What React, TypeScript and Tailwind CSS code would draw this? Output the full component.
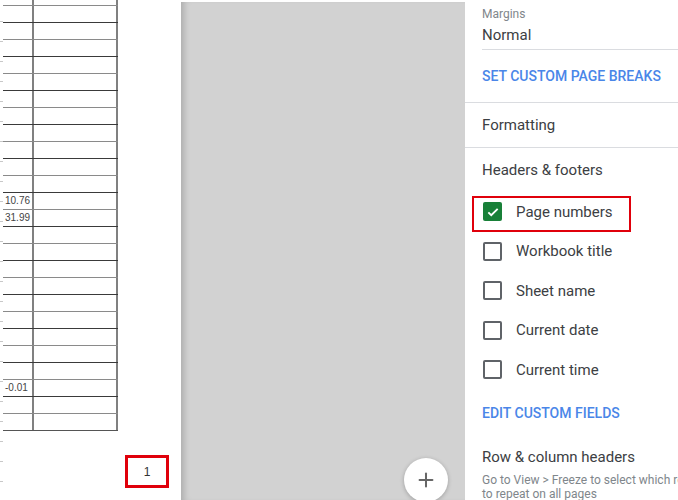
import { Plus } from "lucide-react";

const rows = Array.from({ length: 25 }, (_, i) => i);
const values: Record<number, string> = { 11: "10.76", 12: "31.99", 22: "-0.01" };

function Checkbox({ checked }: { checked?: boolean }) {
  if (checked) {
    return (
      <span className="flex h-[19px] w-[19px] items-center justify-center rounded-[2px] bg-[#188038]">
        <svg width="14" height="14" viewBox="0 0 24 24" fill="none" stroke="white" strokeWidth="3.2">
          <path d="M4 12.5l5 5L20 6.5" />
        </svg>
      </span>
    );
  }
  return <span className="h-[19px] w-[19px] rounded-[2px] border-2 border-[#5f6368]" />;
}

function Option({ label, checked, marked }: { label: string; checked?: boolean; marked?: boolean }) {
  return (
    <div className="relative flex h-[39.5px] shrink-0 items-center gap-[14px] pl-[18px]">
      <Checkbox checked={checked} />
      <span className="text-[15px] text-[#3c4043]">{label}</span>
      {marked && (
        <div className="absolute left-[7px] top-[4px] h-[36px] w-[159px] border-2 border-[#e0000b]" />
      )}
    </div>
  );
}

export default function App() {
  return (
    <div className="flex h-[500px] w-[678px] overflow-hidden bg-white font-['Roboto',sans-serif]">
      {/* printed page preview */}
      <div className="flex w-[181px] shrink-0 font-['Liberation_Sans',Arial,sans-serif]">
        <div className="flex w-[3px] shrink-0 flex-col pt-[2px]">
          {Array.from({ length: 24 }, (_, i) => (
            <div key={i} className="h-[20px] shrink-0 border-b border-[#c8c8c8]" />
          ))}
        </div>
        <div className="flex flex-1 flex-col">
          <div className="flex w-[115px] shrink-0 flex-col border-b border-[#555]">
            <div className="flex h-[5px]">
              <div className="w-[31px] border-r-2 border-[#808080]" />
              <div className="w-[84px] border-r-2 border-[#808080]" />
            </div>
            {rows.map((i) => (
              <div
                key={i}
                className={`flex h-[17px] shrink-0 border-t ${i % 2 === 0 ? "border-[#8a8a8a]" : "border-[#3a3a3a]"}`}
              >
                <div className="flex w-[31px] items-center border-r-2 border-[#808080] pl-[2px] text-[10px] leading-none text-[#444]">
                  {values[i] ?? ""}
                </div>
                <div className="w-[84px] border-r-2 border-[#808080]" />
              </div>
            ))}
          </div>
          <div className="mt-[24px] flex shrink-0 justify-end pr-[12px]">
            <div className="flex h-[33px] w-[44px] items-center justify-center border-[3px] border-[#e0000b] text-[12px] text-[#333]">
              1
            </div>
          </div>
        </div>
      </div>

      {/* gray canvas */}
      <div className="relative mt-[2px] w-[284px] shrink-0 bg-[#d2d2d2] shadow-[inset_7px_0_6px_-4px_rgba(0,0,0,0.18)]">
        <button className="absolute bottom-[-2px] right-[17px] flex h-[44px] w-[44px] items-center justify-center rounded-full bg-white shadow-[0_1px_4px_rgba(0,0,0,0.25)]">
          <Plus size={22} strokeWidth={2.2} className="text-[#666]" />
        </button>
      </div>

      {/* settings panel */}
      <div className="min-w-0 flex-1 whitespace-nowrap">
        <div className="pl-[17px] pt-[6px]">
          <div className="text-[12px] leading-[16px] text-[#80868b]">Margins</div>
          <div className="mt-[3px] text-[15px] leading-[20px] text-[#3c4043]">Normal</div>
          <div className="mt-[4px] border-t border-[#dadce0]" />
        </div>
        <div className="flex h-[52px] items-center pl-[17px] text-[14px] font-medium text-[#4a86e8]">
          SET CUSTOM PAGE BREAKS
        </div>
        <div className="border-t border-[#dadce0]" />
        <div className="flex h-[44px] items-center pl-[17px] text-[15px] text-[#3c4043]">Formatting</div>
        <div className="border-t border-[#dadce0]" />
        <div className="pl-[17px] pt-[12px] text-[15px] leading-[20px] text-[#3c4043]">Headers &amp; footers</div>
        <div className="mt-[12px] flex flex-col">
          <Option label="Page numbers" checked marked />
          <Option label="Workbook title" />
          <Option label="Sheet name" />
          <Option label="Current date" />
          <Option label="Current time" />
        </div>
        <div className="mt-[13px] pl-[17px] text-[14px] font-medium leading-[20px] text-[#4a86e8]">
          EDIT CUSTOM FIELDS
        </div>
        <div className="mt-[24px] pl-[17px] text-[15px] leading-[20px] text-[#3c4043]">Row &amp; column headers</div>
        <div className="mt-[6px] pl-[17px] text-[12px] leading-[14px] text-[#80868b]">
          <div>Go to View &gt; Freeze to select which rows</div>
          <div>to repeat on all pages</div>
        </div>
      </div>
    </div>
  );
}
